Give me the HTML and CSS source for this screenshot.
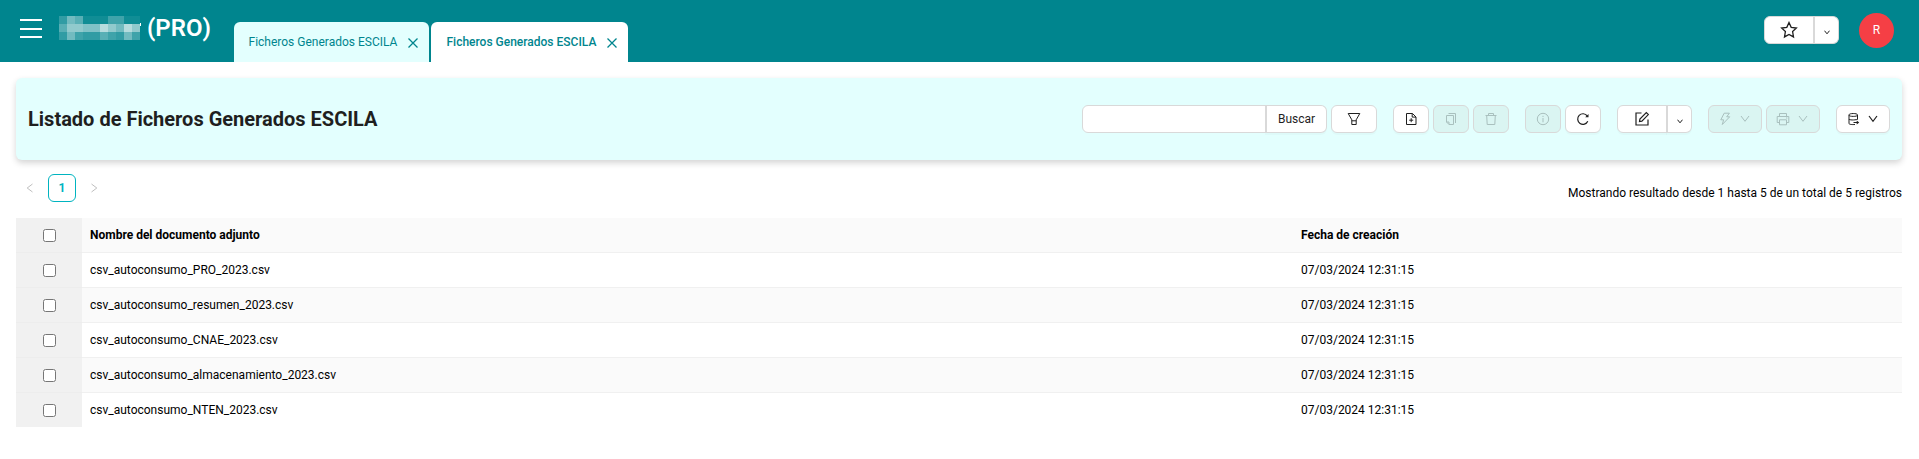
FILE: index.html
```html
<!DOCTYPE html>
<html lang="es">
<head>
<meta charset="utf-8">
<title>Ficheros Generados ESCILA</title>
<link rel="stylesheet" href="styles.css">
</head>
<body>
<header class="topbar">
  <div class="menu"><i></i><i></i><i></i></div>
  <svg class="mosaic" width="82" height="24" viewBox="0 0 82 24" shape-rendering="crispEdges">
    <path fill="#319ca4" d="M0 0h8v8H0zM0 16h81v8H0z"/>
    <path fill="#72bbc0" d="M8 0h8v8H8zM8 16h8v8H8zM57 8h8v8h-8zM65 16h8v8h-8z"/>
    <path fill="#58afb5" d="M16 0h8v8h-8zM0 8h8v8H0zM41 16h8v8h-8z"/>
    <path fill="#108d95" d="M24 0h25v8H24zM65 0h16v8H65z"/>
    <path fill="#3fa3aa" d="M49 0h16v8H49zM16 16h8v8h-8zM49 16h8v8h-8zM73 16h8v8h-8z"/>
    <path fill="#91cacd" d="M8 8h16v8H8zM49 8h8v8h-8zM73 8h8v8h-8z"/>
    <path fill="#80c2c7" d="M24 8h17v8H24z"/>
    <path fill="#b6dcde" d="M41 8h8v8h-8zM65 8h8v8h-8z"/>
    <path fill="#fff" d="M81 7h1v3h-1z"/>
  </svg>
  <h1 class="brand">(PRO)</h1>
  <nav class="tabs">
    <div class="tab">Ficheros Generados ESCILA<svg width="10" height="10" viewBox="0 0 10 10"><path d="M.5.5l9 9M9.500.5l-9 9"/></svg></div>
    <div class="tab active">Ficheros Generados ESCILA<svg width="10" height="10" viewBox="0 0 10 10"><path d="M.5.5l9 9M9.500.5l-9 9"/></svg></div>
  </nav>
  <div class="group fav">
    <button class="btn w50"><svg class="ic" width="18" height="18" viewBox="0 0 18 18"><path stroke-width="1.300" d="M9 1.500l2.200 4.800 5.200.7-3.800 3.600.9 5.300L9 13.400l-4.500 2.500.9-5.300L1.600 7l5.200-.7z"/></svg></button>
    <button class="btn w26"><svg class="ic low" width="6" height="5" viewBox="0 0 6 5"><path d="M.5.700L3 3.800 5.500.700"/></svg></button>
  </div>
  <div class="avatar">R</div>
</header>
<main class="page">
  <section class="panel">
    <h2 class="title">Listado de Ficheros Generados ESCILA</h2>
    <div class="group">
      <input class="search" type="text" aria-label="Buscar">
      <button class="btn w62">Buscar</button>
    </div>
    <button class="btn w46"><svg class="ic" width="14" height="14" viewBox="0 0 14 14"><path d="M1.200 1.500h11.600L9.200 7.800v4.700H4.800V7.800zM4.800 8.800h4.400"/></svg></button>
    <button class="btn w36 gap"><svg class="ic" width="14" height="14" viewBox="0 0 14 14"><path d="M2.500 1.500h6l3.500 3.500v7.500H2.500zM8.200 1.500v3.600H12M7.200 6.200v4M5.200 8.200h4"/></svg></button>
    <button class="btn w36 off"><svg class="ic" width="14" height="14" viewBox="0 0 14 14"><path d="M2.500 3.500h7v9H5L2.500 10zM2.500 10H5v2.500M4.500 1.500h7v9.500"/></svg></button>
    <button class="btn w36 off"><svg class="ic" width="14" height="14" viewBox="0 0 14 14"><path d="M1.500 3.500h11M4.500 3.500V1.500h5v2M2.700 3.500l.5 9h7.600l.5-9"/></svg></button>
    <button class="btn w36 off gap"><svg class="ic" width="14" height="14" viewBox="0 0 14 14"><circle cx="7" cy="7" r="5.700"/><path d="M7 6v4.300M7 3.800v1.200"/></svg></button>
    <button class="btn w36"><svg class="ic" width="14" height="14" viewBox="0 0 14 14"><path stroke-width="1.200" d="M11.800 9.300A5.300 5.300 0 1 1 11.200 3.800"/><path class="solid" d="M12.500 2v3.300H9.200z"/></svg></button>
    <div class="group gap">
      <button class="btn w50"><svg class="ic" width="16" height="16" viewBox="0 0 16 16"><path stroke-width="1.200" d="M7.500 2H2v12h12V8.500M5.500 10.500l.4-2.400 6.400-6.500 2 2-6.400 6.500z"/></svg></button>
      <button class="btn w26"><svg class="ic low" width="6" height="5" viewBox="0 0 6 5"><path d="M.5.700L3 3.800 5.500.700"/></svg></button>
    </div>
    <button class="btn w54 off gap"><svg class="ic" width="14" height="14" viewBox="0 0 14 14"><path d="M6.200 1.200h5.200L8.700 4.800h3L4.300 12.500l1.300-4.700H2.800z"/></svg><svg class="ic" width="10" height="8" viewBox="0 0 10 8"><path d="M1 1l4 5.300L9 1"/></svg></button>
    <button class="btn w54 off"><svg class="ic" width="14" height="14" viewBox="0 0 14 14"><path d="M3.500 4.500V1.500h7v3M3.500 10.500h-2.300v-6h11.600v6h-2.300M3.500 7.800h7v5h-7zM10 6h1.300"/></svg><svg class="ic" width="10" height="8" viewBox="0 0 10 8"><path d="M1 1l4 5.300L9 1"/></svg></button>
    <button class="btn w54 gap"><svg class="ic" width="14" height="14" viewBox="0 0 14 14"><path d="M11.500 7.500V2.800c0-1.700-8.500-1.700-8.500 0v8.700c0 1 3 1.200 6 1M3 3.200c0 1.600 8.500 1.600 8.500 0M3 7c0 1.200 5.500 1.300 8.500.3M7.500 10.500h4"/><path class="solid" d="M10.700 8.500l2.500 2-2.500 2z"/></svg><svg class="ic" width="10" height="8" viewBox="0 0 10 8"><path stroke-width="1.200" d="M1 1l4 5.300L9 1"/></svg></button>
  </section>
  <section class="meta">
    <div class="pager">
      <svg width="8" height="10" viewBox="0 0 8 10"><path d="M6.500 1L1.200 5l5.300 4"/></svg>
      <span class="current">1</span>
      <svg width="8" height="10" viewBox="0 0 8 10"><path d="M1.500 1l5.300 4-5.300 4"/></svg>
    </div>
    <p class="summary">Mostrando resultado desde 1 hasta 5 de un total de 5 registros</p>
  </section>
  <div class="table">
    <div class="row head"><span class="sel"><input type="checkbox"></span><span class="name">Nombre del documento adjunto</span><span>Fecha de creación</span></div>
    <div class="row"><span class="sel"><input type="checkbox"></span><span class="name">csv_autoconsumo_PRO_2023.csv</span><span>07/03/2024 12:31:15</span></div>
    <div class="row alt"><span class="sel"><input type="checkbox"></span><span class="name">csv_autoconsumo_resumen_2023.csv</span><span>07/03/2024 12:31:15</span></div>
    <div class="row"><span class="sel"><input type="checkbox"></span><span class="name">csv_autoconsumo_CNAE_2023.csv</span><span>07/03/2024 12:31:15</span></div>
    <div class="row alt"><span class="sel"><input type="checkbox"></span><span class="name">csv_autoconsumo_almacenamiento_2023.csv</span><span>07/03/2024 12:31:15</span></div>
    <div class="row"><span class="sel"><input type="checkbox"></span><span class="name">csv_autoconsumo_NTEN_2023.csv</span><span>07/03/2024 12:31:15</span></div>
  </div>
</main>
</body>
</html>
```
FILE: styles.css
```css
* { box-sizing: border-box; }
body { margin: 0; background: #fff; color: #000; font: 12px/18px Roboto, "Liberation Sans", sans-serif; }
h1, h2, p { margin: 0; }

.topbar { display: flex; height: 62px; padding-left: 20px; background: #00858e; }
.menu { display: flex; flex: none; flex-direction: column; gap: 6.500px; width: 22px; padding-top: 19px; }
.menu i { height: 2px; background: #fff; }
.mosaic { flex: none; margin: 16px 0 0 17px; }
.brand { flex: none; width: 93px; padding: 13px 0 0 6px; color: #fff; font-size: 24px; line-height: 30px; font-weight: 600; }
.tabs { display: flex; flex: none; gap: 2px; padding-top: 22px; }
.tab { display: flex; align-items: center; justify-content: space-between; width: 195px; padding: 0 11px 0 14.500px; border-radius: 6px 6px 0 0; background: #e3fffe; color: #00858e; white-space: nowrap; }
.tab.active { width: 197px; padding-left: 15.500px; background: #fff; font-weight: 500; }
.tab svg { margin-top: 2px; fill: none; stroke: #00858e; stroke-width: 1.300; }
.fav { margin: 16px 0 0 auto; }
.avatar { width: 35px; height: 35px; margin: 13px 25px 0 20px; border-radius: 50%; background: #f53f45; color: #fff; text-align: center; line-height: 34px; }

.page { padding: 16px 17px 0 16px; }
.panel { display: flex; align-items: center; gap: 4px; height: 82px; padding: 0 12px; border-radius: 6px; background: #e3fffe; box-shadow: 0 3px 6px rgba(0, 0, 0, .17); }
.title { margin-right: auto; color: #1f1f1f; font-size: 20px; line-height: 28px; font-weight: 700; }
.group { display: flex; height: 28px; }
.btn, .search { height: 28px; padding: 0; border: 1px solid #d9d9d9; border-radius: 6px; background: #fff; }
.btn { display: flex; align-items: center; justify-content: center; gap: 8px; color: #1f1f1f; font: inherit; box-shadow: 0 2px 0 rgba(0, 0, 0, .02); }
.group > :first-child { border-radius: 6px 0 0 6px; }
.group > :last-child { margin-left: -1px; border-radius: 0 6px 6px 0; border-left-width: 2px; }
.search { width: 184px; }
.w26 { width: 26px; }
.w36 { width: 36px; }
.w46 { width: 46px; }
.w50 { width: 50px; }
.w54 { width: 54px; padding-right: 2px; }
.w62 { width: 62px; }
.gap { margin-left: 12px; }
.off { background: #daf5f2; color: #a9c0be; box-shadow: none; }
.ic { fill: none; stroke: currentColor; }
.solid { fill: currentColor; stroke: none; }
.low { margin-top: 4px; }

.meta { display: flex; justify-content: space-between; height: 58px; padding-top: 14px; }
.pager { display: flex; align-items: center; gap: 14px; height: 28px; padding-left: 10px; }
.pager svg { fill: none; stroke: #bfbfbf; }
.current { width: 28px; height: 28px; border: 1px solid #00b4c0; border-radius: 6px; color: #00b4c0; text-align: center; font-weight: 700; line-height: 26px; }
.summary { padding-top: 10px; }

.row { display: grid; grid-template-columns: 66px 1211px 1fr; height: 35px; line-height: 35px; }
.row > span { height: 35px; padding-left: 8px; border-bottom: 1px solid #f0f0f0; }
.row > .sel { display: flex; align-items: center; padding-left: 27px; border-color: #ededed; background: #f1f1f1; }
.sel input { width: 13px; height: 13px; margin: 1px 0 0; }
.head, .alt { background: #fafafa; }
.head { font-weight: 700; }
.row:last-child { height: 34px; }
.row:last-child > span { height: 34px; border-bottom: 0; }
```
